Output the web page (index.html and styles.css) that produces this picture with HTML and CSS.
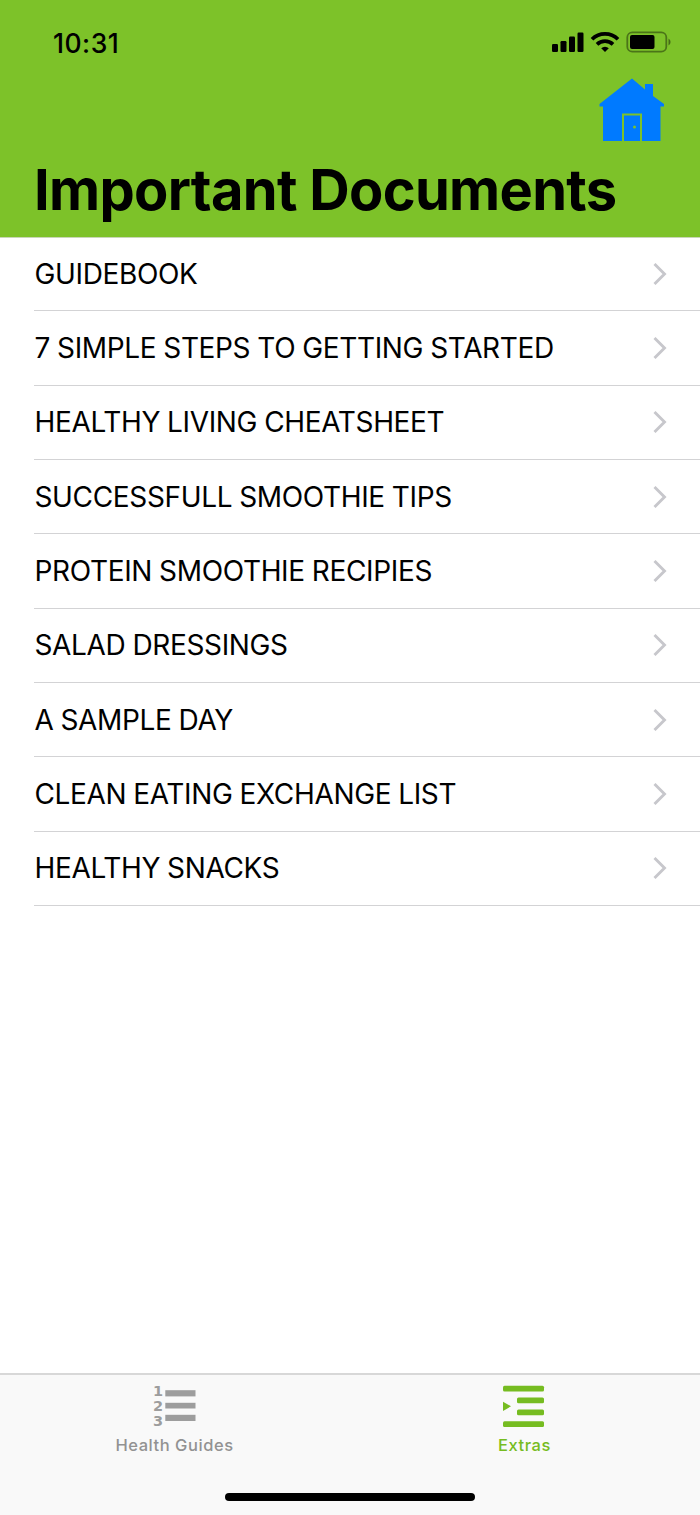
FILE: index.html
```
<!DOCTYPE html>
<html lang="en">
<head>
  <meta charset="UTF-8" />
  <meta name="viewport" content="width=device-width, initial-scale=1.0"/>
  <title>Important Documents</title>
  <link rel="stylesheet" href="styles.css">
</head>
<body>
  <!-- Shared chevron -->
  <svg class="sprite" width="0" height="0">
    <symbol id="chevron" viewBox="0 0 14 22">
      <path d="M1.5 1L11.5 11L1.5 21" fill="none" stroke="#c7c7cc" stroke-width="2.9"/>
    </symbol>
  </svg>

  <!-- Header -->
  <header class="header">
    <div class="status-bar">
      <span class="time">10:31</span>
      <svg class="status-icons" width="120" height="22" viewBox="0 0 120 22">
        <rect x="0" y="13" width="6" height="8" rx="1.2"/>
        <rect x="8.5" y="10" width="6" height="11" rx="1.2"/>
        <rect x="17" y="5.5" width="6" height="15.5" rx="1.2"/>
        <rect x="25.5" y="1.5" width="6" height="19.5" rx="1.2"/>
        <g fill="none" stroke="#000" stroke-width="3.7">
          <path d="M40 8.2a18.3 18.3 0 0 1 26 0"/>
          <path d="M45 13.4a11.6 11.6 0 0 1 16 0"/>
        </g>
        <path d="M53 21l-3.8-3.8a5.5 5.5 0 0 1 7.6 0z"/>
        <rect x="75.3" y="1.3" width="39" height="19.4" rx="5" fill="none" stroke="#000" stroke-opacity=".4" stroke-width="1.8"/>
        <rect x="78" y="4" width="24.5" height="14" rx="2"/>
        <path d="M116.5 7.5a4 4 0 0 1 0 7z" opacity=".45"/>
      </svg>
    </div>
    <a class="home" href="#" aria-label="Home">
      <svg width="66" height="64" viewBox="0 0 66 64">
        <path fill="#007aff" d="M33 0.5L46 11.5V6H54V18L65 26V28.500H61.5V63H4V28.500H0.5V26Z"/>
        <path fill="none" stroke="#7dc229" stroke-width="2" d="M24 63V36.500H42V63"/>
        <circle cx="35.500" cy="49" r="1.500" fill="#7dc229"/>
      </svg>
    </a>
    <h1>Important Documents</h1>
  </header>

  <!-- Document List -->
  <ul class="documents">
    <li><span>GUIDEBOOK</span><svg class="chevron"><use href="#chevron"/></svg></li>
    <li><span>7 SIMPLE STEPS TO GETTING STARTED</span><svg class="chevron"><use href="#chevron"/></svg></li>
    <li><span>HEALTHY LIVING CHEATSHEET</span><svg class="chevron"><use href="#chevron"/></svg></li>
    <li><span>SUCCESSFULL SMOOTHIE TIPS</span><svg class="chevron"><use href="#chevron"/></svg></li>
    <li><span>PROTEIN SMOOTHIE RECIPIES</span><svg class="chevron"><use href="#chevron"/></svg></li>
    <li><span>SALAD DRESSINGS</span><svg class="chevron"><use href="#chevron"/></svg></li>
    <li><span>A SAMPLE DAY</span><svg class="chevron"><use href="#chevron"/></svg></li>
    <li><span>CLEAN EATING EXCHANGE LIST</span><svg class="chevron"><use href="#chevron"/></svg></li>
    <li><span>HEALTHY SNACKS</span><svg class="chevron"><use href="#chevron"/></svg></li>
  </ul>

  <!-- Tab Bar -->
  <nav class="tab-bar">
    <a class="tab" href="#">
      <svg width="44" height="44" viewBox="0 0 44 44">
        <g class="digits">
          <text x="0" y="12">1</text>
          <text x="0" y="27">2</text>
          <text x="0" y="42">3</text>
        </g>
        <rect x="12.3" y="6.2" width="30.2" height="6.2"/>
        <rect x="12.3" y="18.8" width="30.2" height="5.7"/>
        <rect x="12.3" y="30.8" width="30.2" height="6.2"/>
      </svg>
      <span>Health Guides</span>
    </a>
    <a class="tab active" href="#">
      <svg width="44" height="44" viewBox="0 0 44 44">
        <rect x="0" y="1.8" width="41" height="5.7" rx="1.5"/>
        <rect x="14" y="13.5" width="27" height="5.7" rx="1.5"/>
        <rect x="14" y="25.5" width="27" height="5.7" rx="1.5"/>
        <rect x="0" y="37.3" width="41" height="5.7" rx="1.5"/>
        <path d="M0 17.7L8 22.3L0 27Z"/>
      </svg>
      <span>Extras</span>
    </a>
    <div class="home-indicator"></div>
  </nav>
</body>
</html>
```
FILE: styles.css
```
:root {
  --green: #7dc229;
  --line: #d3d3d5;
}

* {
  box-sizing: border-box;
}

body {
  font-family: Inter, 'Liberation Sans', sans-serif;
  margin: 0;
  background: #fff;
  color: #000;
  display: flex;
  flex-direction: column;
  height: 1515px;
}

.sprite {
  position: absolute;
}

.header {
  background: var(--green);
  height: 237px;
  display: flex;
  flex-direction: column;
  flex-shrink: 0;
}

.status-bar {
  display: flex;
  justify-content: space-between;
  align-items: flex-start;
  height: 78px;
  padding: 31px 28px 0 53px;
}

.time {
  font-size: 26.5px;
  font-weight: 550;
  letter-spacing: 0.5px;
  line-height: 24px;
}

.home {
  align-self: flex-end;
  height: 64px;
  margin-right: 35px;
}

h1 {
  margin: 14px 0 0 34px;
  font-size: 56px;
  font-weight: 700;
  letter-spacing: -0.7px;
  line-height: 68px;
  white-space: nowrap;
}

.documents {
  list-style: none;
  margin: 0;
  padding: 0 0 0 34px;
  flex: 1;
  border-top: 1px solid #c9d6b8;
}

.documents li {
  display: flex;
  justify-content: space-between;
  align-items: center;
  height: 74.35px;
  padding-right: 33px;
  border-bottom: 1px solid var(--line);
  font-size: 28px;
  letter-spacing: -0.35px;
  word-spacing: -0.5px;
  white-space: nowrap;
}

.documents li:first-child {
  height: 73.4px;
}

.documents span {
  padding-left: 0.5px;
}

.chevron {
  width: 14px;
  height: 22px;
}

.tab-bar {
  display: grid;
  grid-template-columns: 1fr 1fr;
  grid-template-rows: 110px 1fr;
  height: 142px;
  background: #f9f9f9;
  border-top: 2px solid #d8d8d8;
}

.tab {
  display: flex;
  flex-direction: column;
  align-items: center;
  padding-top: 9px;
  color: #929292;
  font-size: 16.5px;
  font-weight: 450;
  letter-spacing: 0.55px;
  text-decoration: none;
}

.tab svg {
  fill: #9d9d9d;
}

.tab span {
  margin-top: 6px;
  margin-right: 1px;
  line-height: 22px;
}

.digits {
  font: bold 14.5px 'DejaVu Sans', sans-serif;
  letter-spacing: 0;
}

.active {
  color: #76bc21;
}

.active svg {
  fill: #76bc21;
}

.home-indicator {
  grid-column: 1 / 3;
  justify-self: center;
  width: 250px;
  height: 8px;
  margin-top: 8px;
  border-radius: 4px;
  background: #000;
}
```
